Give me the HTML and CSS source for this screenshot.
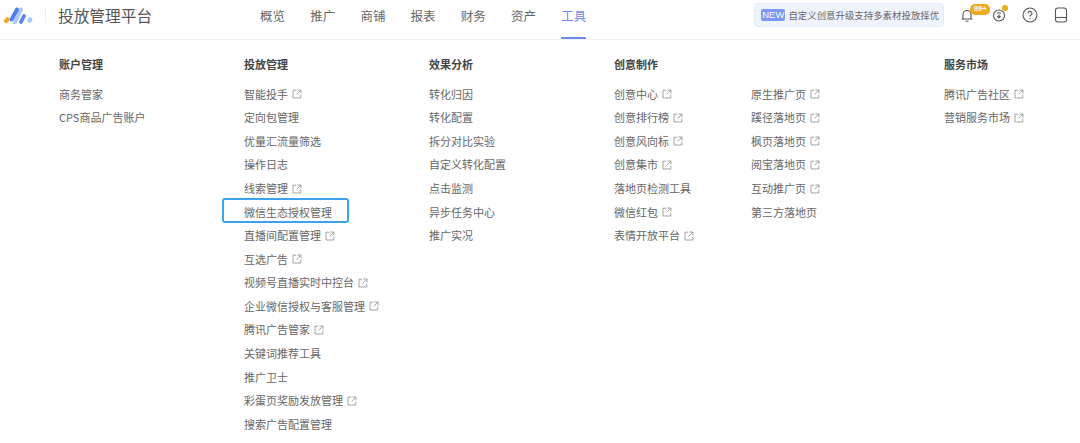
FILE: index.html
```html
<!DOCTYPE html>
<html lang="zh">
<head>
<meta charset="utf-8">
<title>投放管理平台</title>
<link rel="stylesheet" href="styles.css">
</head>
<body>
<svg class="defs" width="0" height="0"><symbol id="ext" viewBox="0 0 10 10"><path d="M4.2 1.2H1v7.8h7.8V5.8M5.4 1H9v3.6M9 1L4.6 5.4" fill="none" stroke="currentColor" stroke-width=".9"/></symbol></svg>
<header class="topbar">
  <svg class="logo" width="32" height="20" viewBox="0 0 32 20">
    <path d="M5 16l1.400-1.600" stroke="#f0a92c" stroke-width="4.400" stroke-linecap="round"/>
    <path d="M14 17L20 4.500" stroke="#a9c8fa" stroke-width="4" stroke-linecap="round"/>
    <path d="M10.500 14.500L16 4.500" stroke="#4f7df0" stroke-width="4" stroke-linecap="round"/>
    <path d="M20 17l3-6" stroke="#5f86f0" stroke-width="3.800" stroke-linecap="round"/>
    <path d="M28.500 15.500l.6-1" stroke="#a9c8fa" stroke-width="4.400" stroke-linecap="round"/>
  </svg>
  <span class="divider"></span>
  <span class="brand">投放管理平台</span>
  <nav class="nav">
    <a class="nav-item">概览</a><a class="nav-item">推广</a><a class="nav-item">商铺</a><a class="nav-item">报表</a><a class="nav-item">财务</a><a class="nav-item">资产</a><a class="nav-item active">工具</a>
  </nav>
  <div class="notice"><span class="new">NEW</span><span>自定义创意升级支持多素材投放择优</span></div>
  <div class="tools">
    <span class="tool">
      <svg width="16" height="16" viewBox="0 0 16 16"><path d="M4 12V7.500a4 4 0 0 1 8 0V12M2.500 12h11M6.500 14.300h3" fill="none" stroke="#555" stroke-width="1.100"/></svg>
      <span class="badge">99+</span>
    </span>
    <span class="tool">
      <svg width="16" height="16" viewBox="0 0 16 16"><circle cx="8" cy="8.500" r="5.500" fill="none" stroke="#555" stroke-width="1.100"/><path d="M6 6h4M8 7.500v3.500M6.300 9L8 11l1.700-2" fill="none" stroke="#555" stroke-width="1.100"/></svg>
      <span class="dot"></span>
    </span>
    <span class="tool">
      <svg width="16" height="16" viewBox="0 0 16 16"><circle cx="8" cy="8" r="7" fill="none" stroke="#555" stroke-width="1.100"/><path d="M6 6.400a2 2 0 1 1 3 1.700c-.7.400-1 .8-1 1.500M8 11v1.200" fill="none" stroke="#555" stroke-width="1.100"/></svg>
    </span>
    <span class="tool">
      <svg width="16" height="16" viewBox="0 0 16 16"><rect x="2.500" y="1" width="11" height="14" rx="2.500" fill="none" stroke="#555" stroke-width="1.100"/><path d="M2.500 10.500h11" stroke="#555" stroke-width="1.100"/></svg>
    </span>
  </div>
</header>
<main class="menu">
  <section class="col">
    <h3 class="col-title">账户管理</h3>
    <ul class="list">
      <li>商务管家</li>
      <li>CPS商品广告账户</li>
    </ul>
  </section>
  <section class="col">
    <h3 class="col-title">投放管理</h3>
    <ul class="list">
      <li>智能投手<svg class="ext"><use href="#ext"/></svg></li>
      <li>定向包管理</li>
      <li>优量汇流量筛选</li>
      <li>操作日志</li>
      <li>线索管理<svg class="ext"><use href="#ext"/></svg></li>
      <li class="focus">微信生态授权管理</li>
      <li>直播间配置管理<svg class="ext"><use href="#ext"/></svg></li>
      <li>互选广告<svg class="ext"><use href="#ext"/></svg></li>
      <li>视频号直播实时中控台<svg class="ext"><use href="#ext"/></svg></li>
      <li>企业微信授权与客服管理<svg class="ext"><use href="#ext"/></svg></li>
      <li>腾讯广告管家<svg class="ext"><use href="#ext"/></svg></li>
      <li>关键词推荐工具</li>
      <li>推广卫士</li>
      <li>彩蛋页奖励发放管理<svg class="ext"><use href="#ext"/></svg></li>
      <li>搜索广告配置管理</li>
    </ul>
  </section>
  <section class="col">
    <h3 class="col-title">效果分析</h3>
    <ul class="list">
      <li>转化归因</li>
      <li>转化配置</li>
      <li>拆分对比实验</li>
      <li>自定义转化配置</li>
      <li>点击监测</li>
      <li>异步任务中心</li>
      <li>推广实况</li>
    </ul>
  </section>
  <section class="col">
    <h3 class="col-title">创意制作</h3>
    <ul class="list">
      <li>创意中心<svg class="ext"><use href="#ext"/></svg></li>
      <li>创意排行榜<svg class="ext"><use href="#ext"/></svg></li>
      <li>创意风向标<svg class="ext"><use href="#ext"/></svg></li>
      <li>创意集市<svg class="ext"><use href="#ext"/></svg></li>
      <li>落地页检测工具</li>
      <li>微信红包<svg class="ext"><use href="#ext"/></svg></li>
      <li>表情开放平台<svg class="ext"><use href="#ext"/></svg></li>
    </ul>
  </section>
  <section class="col">
    <h3 class="col-title">&nbsp;</h3>
    <ul class="list">
      <li>原生推广页<svg class="ext"><use href="#ext"/></svg></li>
      <li>蹊径落地页<svg class="ext"><use href="#ext"/></svg></li>
      <li>枫页落地页<svg class="ext"><use href="#ext"/></svg></li>
      <li>阅宝落地页<svg class="ext"><use href="#ext"/></svg></li>
      <li>互动推广页<svg class="ext"><use href="#ext"/></svg></li>
      <li>第三方落地页</li>
    </ul>
  </section>
  <section class="col">
    <h3 class="col-title">服务市场</h3>
    <ul class="list">
      <li>腾讯广告社区<svg class="ext"><use href="#ext"/></svg></li>
      <li>营销服务市场<svg class="ext"><use href="#ext"/></svg></li>
    </ul>
  </section>
</main>
</body>
</html>
```

FILE: styles.css
```css
* { box-sizing: border-box; }
html, body { margin: 0; height: 443px; overflow: hidden; background: #fff; }
body { font-family: "Noto Sans CJK SC", "Liberation Sans", sans-serif; color: #555; }
.defs { display: block; height: 0; }
.topbar { display: flex; align-items: center; height: 40px; padding-bottom: 9px; border-bottom: 1px solid #f0f0f2; }
.logo { margin-left: 1px; flex: none; }
.divider { width: 1px; height: 16px; background: #eee; margin-left: 12px; }
.brand { margin-left: 12px; font-size: 15.7px; color: #555; width: 202px; }
.nav { display: flex; gap: 25.2px; height: 39px; align-self: flex-start; }
.nav-item { font-size: 12.5px; line-height: 32px; height: 39px; color: #666; }
.nav-item.active { color: #6d8cf0; border-bottom: 2px solid #6d8cf0; }
.notice { display: flex; align-items: center; gap: 3px; margin-left: 168px; width: 190px; height: 24px; padding-left: 6px; background: #eef3fe; border: 1px solid #e4ebfb; border-radius: 4px; font-size: 9.44px; color: #666; white-space: nowrap; }
.new { background: #7c97f4; color: #fff; border-radius: 2px; padding: 0 1px; font-family: "Liberation Sans", sans-serif; font-size: 9.5px; line-height: 12.5px; }
.tools { display: flex; margin-left: 15px; gap: 15.3px; }
.tool { position: relative; display: block; width: 16px; height: 16px; }
.tool svg { display: block; }
.badge { position: absolute; left: 11px; top: -3px; width: 20px; height: 10.5px; border-radius: 5px; background: #eeaa1f; color: #fff; font-family: "Liberation Sans", sans-serif; font-size: 7.5px; font-weight: 700; line-height: 10.5px; text-align: center; }
.dot { position: absolute; left: 11px; top: -2px; width: 6px; height: 6px; border-radius: 50%; background: #eeaa1f; }
.menu { display: grid; grid-template-columns: 185px 185px 185px 137px 193px 1fr; padding: 14px 0 0 59px; }
.col-title { margin: 0 0 8px; font-size: 11px; line-height: 20px; font-weight: 700; color: #444; }
.list { list-style: none; margin: 0; padding: 0; }
.list li { display: flex; align-items: center; position: relative; height: 23.57px; font-size: 11px; color: #666; white-space: nowrap; }
.ext { width: 10px; height: 10px; margin: 1px 0 0 3.5px; color: #999; flex: none; }
.focus::before { content: ""; box-sizing: border-box; position: absolute; left: -22px; top: -2px; width: 127px; height: 25px; border: 2px solid #3ba3f0; border-radius: 3px; }
```
